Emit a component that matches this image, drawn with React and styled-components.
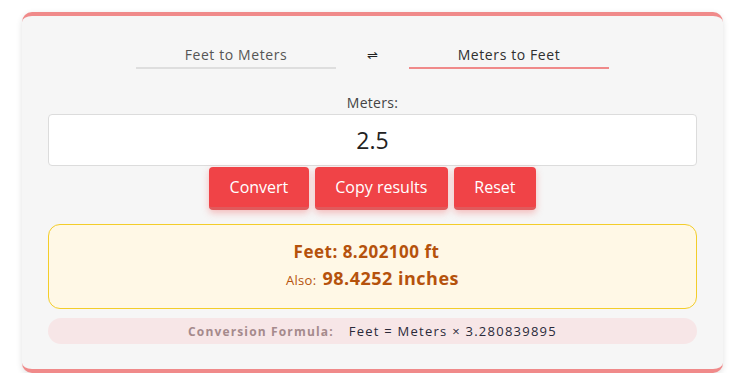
import React, { useState } from "react";
import styled, { createGlobalStyle } from "styled-components";

const Global = createGlobalStyle`
  html, body { margin: 0; padding: 0; background: #ffffff; }
  body { font-family: "Open Sans", "Noto Sans", sans-serif; }
`;

const Page = styled.div`
  padding: 12px 17px 0 22px;
`;

const Card = styled.div`
  background: #f6f6f6;
  border-top: 4px solid #f08a8a;
  border-bottom: 4px solid #f08a8a;
  border-radius: 10px;
  box-shadow: 0 2px 6px rgba(0, 0, 0, 0.12);
  padding: 17px 26px 25px;
  display: flex;
  flex-direction: column;
`;

const Tabs = styled.div`
  display: flex;
  justify-content: center;
  align-items: flex-start;
`;

const Tab = styled.div`
  width: 200px;
  text-align: center;
  font-size: 14px;
  letter-spacing: 0.6px;
  line-height: 20px;
  padding: 12px 0 2px;
  color: ${(p) => (p.$active ? "#2f2f2f" : "#555")};
  border-bottom: 2px solid ${(p) => (p.$active ? "#f08a8a" : "#dedede")};
  cursor: pointer;
`;

const Swap = styled.div`
  width: 73px;
  text-align: center;
  font-size: 13px;
  line-height: 20px;
  padding-top: 12px;
  color: #222;
`;

const Label = styled.label`
  display: block;
  text-align: center;
  font-size: 14px;
  letter-spacing: 0.3px;
  line-height: 20px;
  color: #444;
  margin-top: 24px;
  margin-bottom: 1px;
`;

const Input = styled.input`
  box-sizing: border-box;
  width: 100%;
  height: 52px;
  border: 1px solid #dcdcdc;
  border-radius: 4px;
  background: #fff;
  text-align: center;
  font-family: inherit;
  font-size: 23px;
  color: #222;
  outline: none;
`;

const Buttons = styled.div`
  display: flex;
  justify-content: center;
  gap: 6px;
  margin-top: 1px;
`;

const Button = styled.button`
  font-family: inherit;
  font-size: 16px;
  color: #fff;
  background: #f04347;
  border: none;
  border-bottom: 3px solid #e05a5c;
  border-radius: 4px;
  height: 43px;
  padding: 0 20.5px 1px;
  box-shadow: 0 3px 7px rgba(240, 80, 80, 0.35);
  cursor: pointer;
`;

const Result = styled.div`
  margin-top: 14px;
  background: #fff8e6;
  border: 1px solid #f3cd2a;
  border-radius: 12px;
  padding: 13px 0 14px;
  text-align: center;
  color: #b5520c;
`;

const Line = styled.div`
  font-size: ${(p) => p.$size}px;
  font-weight: 700;
  line-height: 27px;
  letter-spacing: 0.5px;
  padding-right: ${(p) => p.$shift || 0}px;
`;

const Small = styled.span`
  font-size: 13px;
  font-weight: 400;
  letter-spacing: 0.3px;
  margin-right: 6px;
`;

const Formula = styled.div`
  margin-top: 9px;
  height: 26px;
  background: #f7e6e7;
  border-radius: 13px;
  display: flex;
  justify-content: center;
  align-items: center;
  gap: 15px;
  font-size: 13px;
`;

const FLabel = styled.span`
  font-weight: 700;
  font-size: 12px;
  color: #a58a8c;
  letter-spacing: 1.15px;
`;

const FValue = styled.span`
  color: #2a2a3a;
  letter-spacing: 1.25px;
`;

export default function App() {
  const [value, setValue] = useState("2.5");
  return (
    <Page>
      <Global />
      <Card>
        <Tabs>
          <Tab>Feet to Meters</Tab>
          <Swap>⇌</Swap>
          <Tab $active>Meters to Feet</Tab>
        </Tabs>
        <Label>Meters:</Label>
        <Input value={value} onChange={(e) => setValue(e.target.value)} />
        <Buttons>
          <Button>Convert</Button>
          <Button>Copy results</Button>
          <Button>Reset</Button>
        </Buttons>
        <Result>
          <Line $size={17} $shift={12}>Feet: 8.202100 ft</Line>
          <Line $size={18}>
            <Small>Also:</Small>
            98.4252 inches
          </Line>
        </Result>
        <Formula>
          <FLabel>Conversion Formula:</FLabel>
          <FValue>Feet = Meters × 3.280839895</FValue>
        </Formula>
      </Card>
    </Page>
  );
}
